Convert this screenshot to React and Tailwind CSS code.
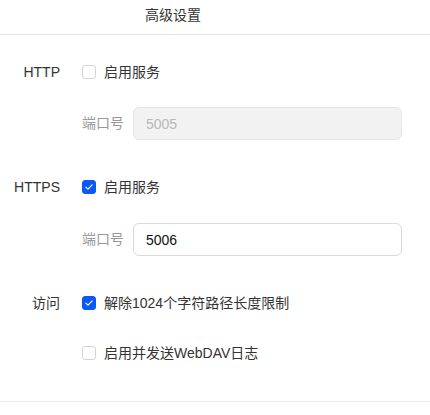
import React, { useState } from 'react';

const font = { fontFamily: '"Liberation Sans", "Noto Sans CJK SC", sans-serif' };

const Checkbox = ({ checked, onChange, label }) => (
    <label className="flex items-center gap-[8px] cursor-pointer text-[14px] text-[#333333]">
        <span
            onClick={onChange}
            className={`flex items-center justify-center w-[14px] h-[14px] rounded-[3px] border ${checked ? 'bg-[#0a59f7] border-[#0a59f7]' : 'bg-white border-[#d4d4d4]'}`}
        >
            {checked && (
                <svg viewBox="0 0 12 12" className="w-[10px] h-[10px]">
                    <path d="M2.2 6.2 L4.8 8.6 L9.8 3.4" fill="none" stroke="white" strokeWidth="1.4" strokeLinecap="round" strokeLinejoin="round" />
                </svg>
            )}
        </span>
        <span>{label}</span>
    </label>
);

const Row = ({ label, children, className = '' }) => (
    <div className={`flex items-center h-10 ${className}`}>
        <div className="w-[60px] text-right text-[14px] text-[#333333]">{label}</div>
        <div className="ml-[22px] flex-1">{children}</div>
    </div>
);

const PortInput = ({ value, disabled, className = '' }) => (
    <div className={`flex items-center ${className}`}>
        <div className="w-[82px] text-right pr-[0px]" />
        <span className="text-[14px] text-[#999999] w-[51px]">端口号</span>
        <input
            type="text"
            defaultValue={value}
            disabled={disabled}
            className={`w-[269px] h-[33px] px-[12px] rounded-[6px] border text-[14px] outline-none ${disabled ? 'bg-[#f2f2f2] border-[#e6e6e6] text-[#b8b8b8]' : 'bg-white border-[#dadada] text-[#111111]'}`}
            style={font}
        />
    </div>
);

const App = () => {
    const [http, setHttp] = useState(false);
    const [https, setHttps] = useState(true);
    const [unlimit, setUnlimit] = useState(true);
    const [davLog, setDavLog] = useState(false);

    return (
        <div className="w-[430px] h-[415px] bg-white" style={font}>
            {/* Header */}
            <div className="h-[35px] border-b border-[#e5e5e5] flex items-center pl-[145px] pb-[4px]">
                <span className="text-[14px] text-[#333333]">高级设置</span>
            </div>

            <Row label="HTTP" className="mt-[17px]">
                <Checkbox checked={http} onChange={() => setHttp(!http)} label="启用服务" />
            </Row>
            <PortInput value="5005" disabled className="mt-[15px]" />

            <Row label="HTTPS" className="mt-[27px]">
                <Checkbox checked={https} onChange={() => setHttps(!https)} label="启用服务" />
            </Row>
            <PortInput value="5006" className="mt-[16px]" />

            <Row label="访问" className="mt-[27px]">
                <Checkbox checked={unlimit} onChange={() => setUnlimit(!unlimit)} label="解除1024个字符路径长度限制" />
            </Row>
            <Row label="" className="mt-[10px]">
                <Checkbox checked={davLog} onChange={() => setDavLog(!davLog)} label="启用并发送WebDAV日志" />
            </Row>

            <div className="mt-[28px] border-t border-[#ececec]" />
        </div>
    );
};

export default App;
